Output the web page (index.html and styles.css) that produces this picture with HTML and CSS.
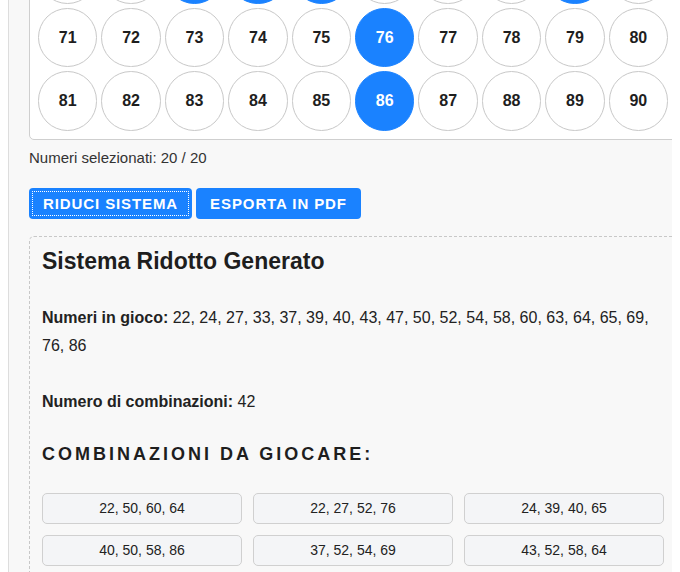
FILE: index.html
```html
<!DOCTYPE html>
<html lang="it">
<head>
<meta charset="utf-8">
<title>Sistema Ridotto Lotto</title>
<link rel="stylesheet" href="styles.css">
</head>
<body>
<main class="app">
  <div class="board">
    <div class="ball">1</div><div class="ball">2</div><div class="ball">3</div><div class="ball">4</div><div class="ball">5</div><div class="ball">6</div><div class="ball">7</div><div class="ball">8</div><div class="ball">9</div><div class="ball">10</div>
    <div class="ball">11</div><div class="ball">12</div><div class="ball">13</div><div class="ball">14</div><div class="ball">15</div><div class="ball">16</div><div class="ball">17</div><div class="ball">18</div><div class="ball">19</div><div class="ball">20</div>
    <div class="ball">21</div><div class="ball is-on">22</div><div class="ball">23</div><div class="ball is-on">24</div><div class="ball">25</div><div class="ball">26</div><div class="ball is-on">27</div><div class="ball">28</div><div class="ball">29</div><div class="ball">30</div>
    <div class="ball">31</div><div class="ball">32</div><div class="ball is-on">33</div><div class="ball">34</div><div class="ball">35</div><div class="ball">36</div><div class="ball is-on">37</div><div class="ball">38</div><div class="ball is-on">39</div><div class="ball is-on">40</div>
    <div class="ball">41</div><div class="ball">42</div><div class="ball is-on">43</div><div class="ball">44</div><div class="ball">45</div><div class="ball">46</div><div class="ball is-on">47</div><div class="ball">48</div><div class="ball">49</div><div class="ball is-on">50</div>
    <div class="ball">51</div><div class="ball is-on">52</div><div class="ball">53</div><div class="ball is-on">54</div><div class="ball">55</div><div class="ball">56</div><div class="ball">57</div><div class="ball is-on">58</div><div class="ball">59</div><div class="ball is-on">60</div>
    <div class="ball">61</div><div class="ball">62</div><div class="ball is-on">63</div><div class="ball is-on">64</div><div class="ball is-on">65</div><div class="ball">66</div><div class="ball">67</div><div class="ball">68</div><div class="ball is-on">69</div><div class="ball">70</div>
    <div class="ball" id="n71">71</div><div class="ball">72</div><div class="ball">73</div><div class="ball">74</div><div class="ball">75</div><div class="ball is-on">76</div><div class="ball">77</div><div class="ball">78</div><div class="ball">79</div><div class="ball">80</div>
    <div class="ball">81</div><div class="ball">82</div><div class="ball">83</div><div class="ball">84</div><div class="ball">85</div><div class="ball is-on">86</div><div class="ball">87</div><div class="ball">88</div><div class="ball">89</div><div class="ball">90</div>
  </div>

  <p class="count">Numeri selezionati: 20 / 20</p>

  <div class="actions">
    <button class="btn is-focused" type="button">Riduci sistema</button>
    <button class="btn" type="button">Esporta in PDF</button>
  </div>

  <section class="results">
    <h3 class="results-title">Sistema Ridotto Generato</h3>
    <p class="info"><strong>Numeri in gioco:</strong> 22, 24, 27, 33, 37, 39, 40, 43, 47, 50, 52, 54, 58, 60, 63, 64, 65, 69, 76, 86</p>
    <p class="info"><strong>Numero di combinazioni:</strong> 42</p>
    <h4 class="combo-title">Combinazioni da giocare:</h4>
    <div class="combos">
      <div class="combo">22, 50, 60, 64</div>
      <div class="combo">22, 27, 52, 76</div>
      <div class="combo">24, 39, 40, 65</div>
      <div class="combo">40, 50, 58, 86</div>
      <div class="combo">37, 52, 54, 69</div>
      <div class="combo">43, 52, 58, 64</div>
      <div class="combo">24, 33, 47, 63</div>
      <div class="combo">27, 39, 54, 86</div>
      <div class="combo">33, 40, 60, 69</div>
      <div class="combo">22, 37, 43, 65</div>
      <div class="combo">47, 58, 64, 76</div>
      <div class="combo">24, 50, 54, 63</div>
      <div class="combo">27, 33, 58, 65</div>
      <div class="combo">39, 43, 60, 76</div>
      <div class="combo">22, 40, 47, 69</div>
      <div class="combo">37, 50, 63, 86</div>
      <div class="combo">24, 27, 43, 69</div>
      <div class="combo">33, 52, 60, 86</div>
      <div class="combo">39, 47, 52, 65</div>
      <div class="combo">22, 33, 54, 64</div>
      <div class="combo">37, 40, 58, 76</div>
      <div class="combo">24, 43, 50, 76</div>
      <div class="combo">27, 47, 60, 63</div>
      <div class="combo">39, 50, 64, 69</div>
      <div class="combo">22, 24, 58, 86</div>
      <div class="combo">33, 37, 39, 64</div>
      <div class="combo">40, 43, 54, 63</div>
      <div class="combo">27, 50, 65, 69</div>
      <div class="combo">47, 54, 60, 65</div>
      <div class="combo">22, 39, 58, 63</div>
      <div class="combo">24, 37, 60, 64</div>
      <div class="combo">33, 43, 47, 86</div>
      <div class="combo">40, 52, 63, 69</div>
      <div class="combo">27, 37, 40, 64</div>
      <div class="combo">50, 52, 65, 86</div>
      <div class="combo">22, 43, 47, 54</div>
      <div class="combo">24, 52, 64, 86</div>
      <div class="combo">33, 50, 58, 76</div>
      <div class="combo">37, 47, 65, 76</div>
      <div class="combo">27, 43, 58, 69</div>
      <div class="combo">39, 54, 76, 86</div>
      <div class="combo">22, 60, 63, 65</div>
    </div>
  </section>
</main>
<script src="script.js"></script>
</body>
</html>
```

FILE: styles.css
```css
html {
  overflow: hidden;
}

body {
  margin: 8px;
  font-family: "Liberation Sans", Arial, Helvetica, sans-serif;
  color: #222;
  background: #fff;
}

.app {
  box-sizing: border-box;
  width: 690px;
  padding: 20px;
  border: 1px solid #ddd;
  background: #f8f8f8;
}

.board {
  display: grid;
  grid-template-columns: repeat(10, 1fr);
  gap: 4px;
  padding: 8px;
  border: 1px solid #cfcfcf;
  border-radius: 5px;
  background: #fff;
}

.ball {
  aspect-ratio: 1 / 1;
  display: flex;
  align-items: center;
  justify-content: center;
  border: 1px solid #c8c8c8;
  border-radius: 50%;
  background: #fff;
  font-size: 16px;
  font-weight: bold;
  color: #1e1e1e;
}

.ball.is-on {
  background: #1a82ff;
  border-color: #1a82ff;
  color: #fff;
}

.count {
  margin: 9px 0 0;
  font-size: 15px;
  line-height: 18px;
  color: #333;
}

.actions {
  display: flex;
  gap: 4px;
  margin-top: 21px;
}

.btn {
  height: 31px;
  padding: 0 14px;
  border: none;
  border-radius: 4px;
  background: #1a82ff;
  color: #fff;
  font-family: "Liberation Sans", Arial, Helvetica, sans-serif;
  font-size: 15px;
  font-weight: bold;
  letter-spacing: 0.9px;
  text-transform: uppercase;
}

.btn.is-focused {
  outline: 1px dotted #fff;
  outline-offset: -4px;
}

.results {
  margin-top: 17px;
  padding: 10px 12px 12px;
  border: 1px dashed #c8c8c8;
  border-radius: 5px;
  background: #f8f8f8;
}

.results-title {
  margin: 0;
  font-size: 23px;
  line-height: 28px;
  font-weight: bold;
  color: #1e1e1e;
}

.info {
  margin: 28px 0 0;
  font-size: 16px;
  line-height: 28px;
  color: #222;
}

.results-title + .info {
  margin-top: 29px;
}

.combo-title {
  margin: 26px 0 0;
  font-size: 18px;
  line-height: 24px;
  font-weight: bold;
  letter-spacing: 3px;
  text-transform: uppercase;
  color: #1e1e1e;
}

.combos {
  display: grid;
  grid-template-columns: repeat(3, 1fr);
  gap: 11px;
  margin-top: 27px;
}

.combo {
  box-sizing: border-box;
  height: 31px;
  display: flex;
  align-items: center;
  justify-content: center;
  border: 1px solid #d0d0d0;
  border-radius: 5px;
  background: #f4f5f7;
  font-size: 14px;
  color: #222;
}
```

FILE: script.js
```js
(function () {
  function align() {
    var ball = document.getElementById('n71');
    if (!ball) return;
    var top = ball.getBoundingClientRect().top + window.scrollY - 8;
    window.scrollTo(0, top);
  }
  align();
  window.addEventListener('load', align);
})();
```
